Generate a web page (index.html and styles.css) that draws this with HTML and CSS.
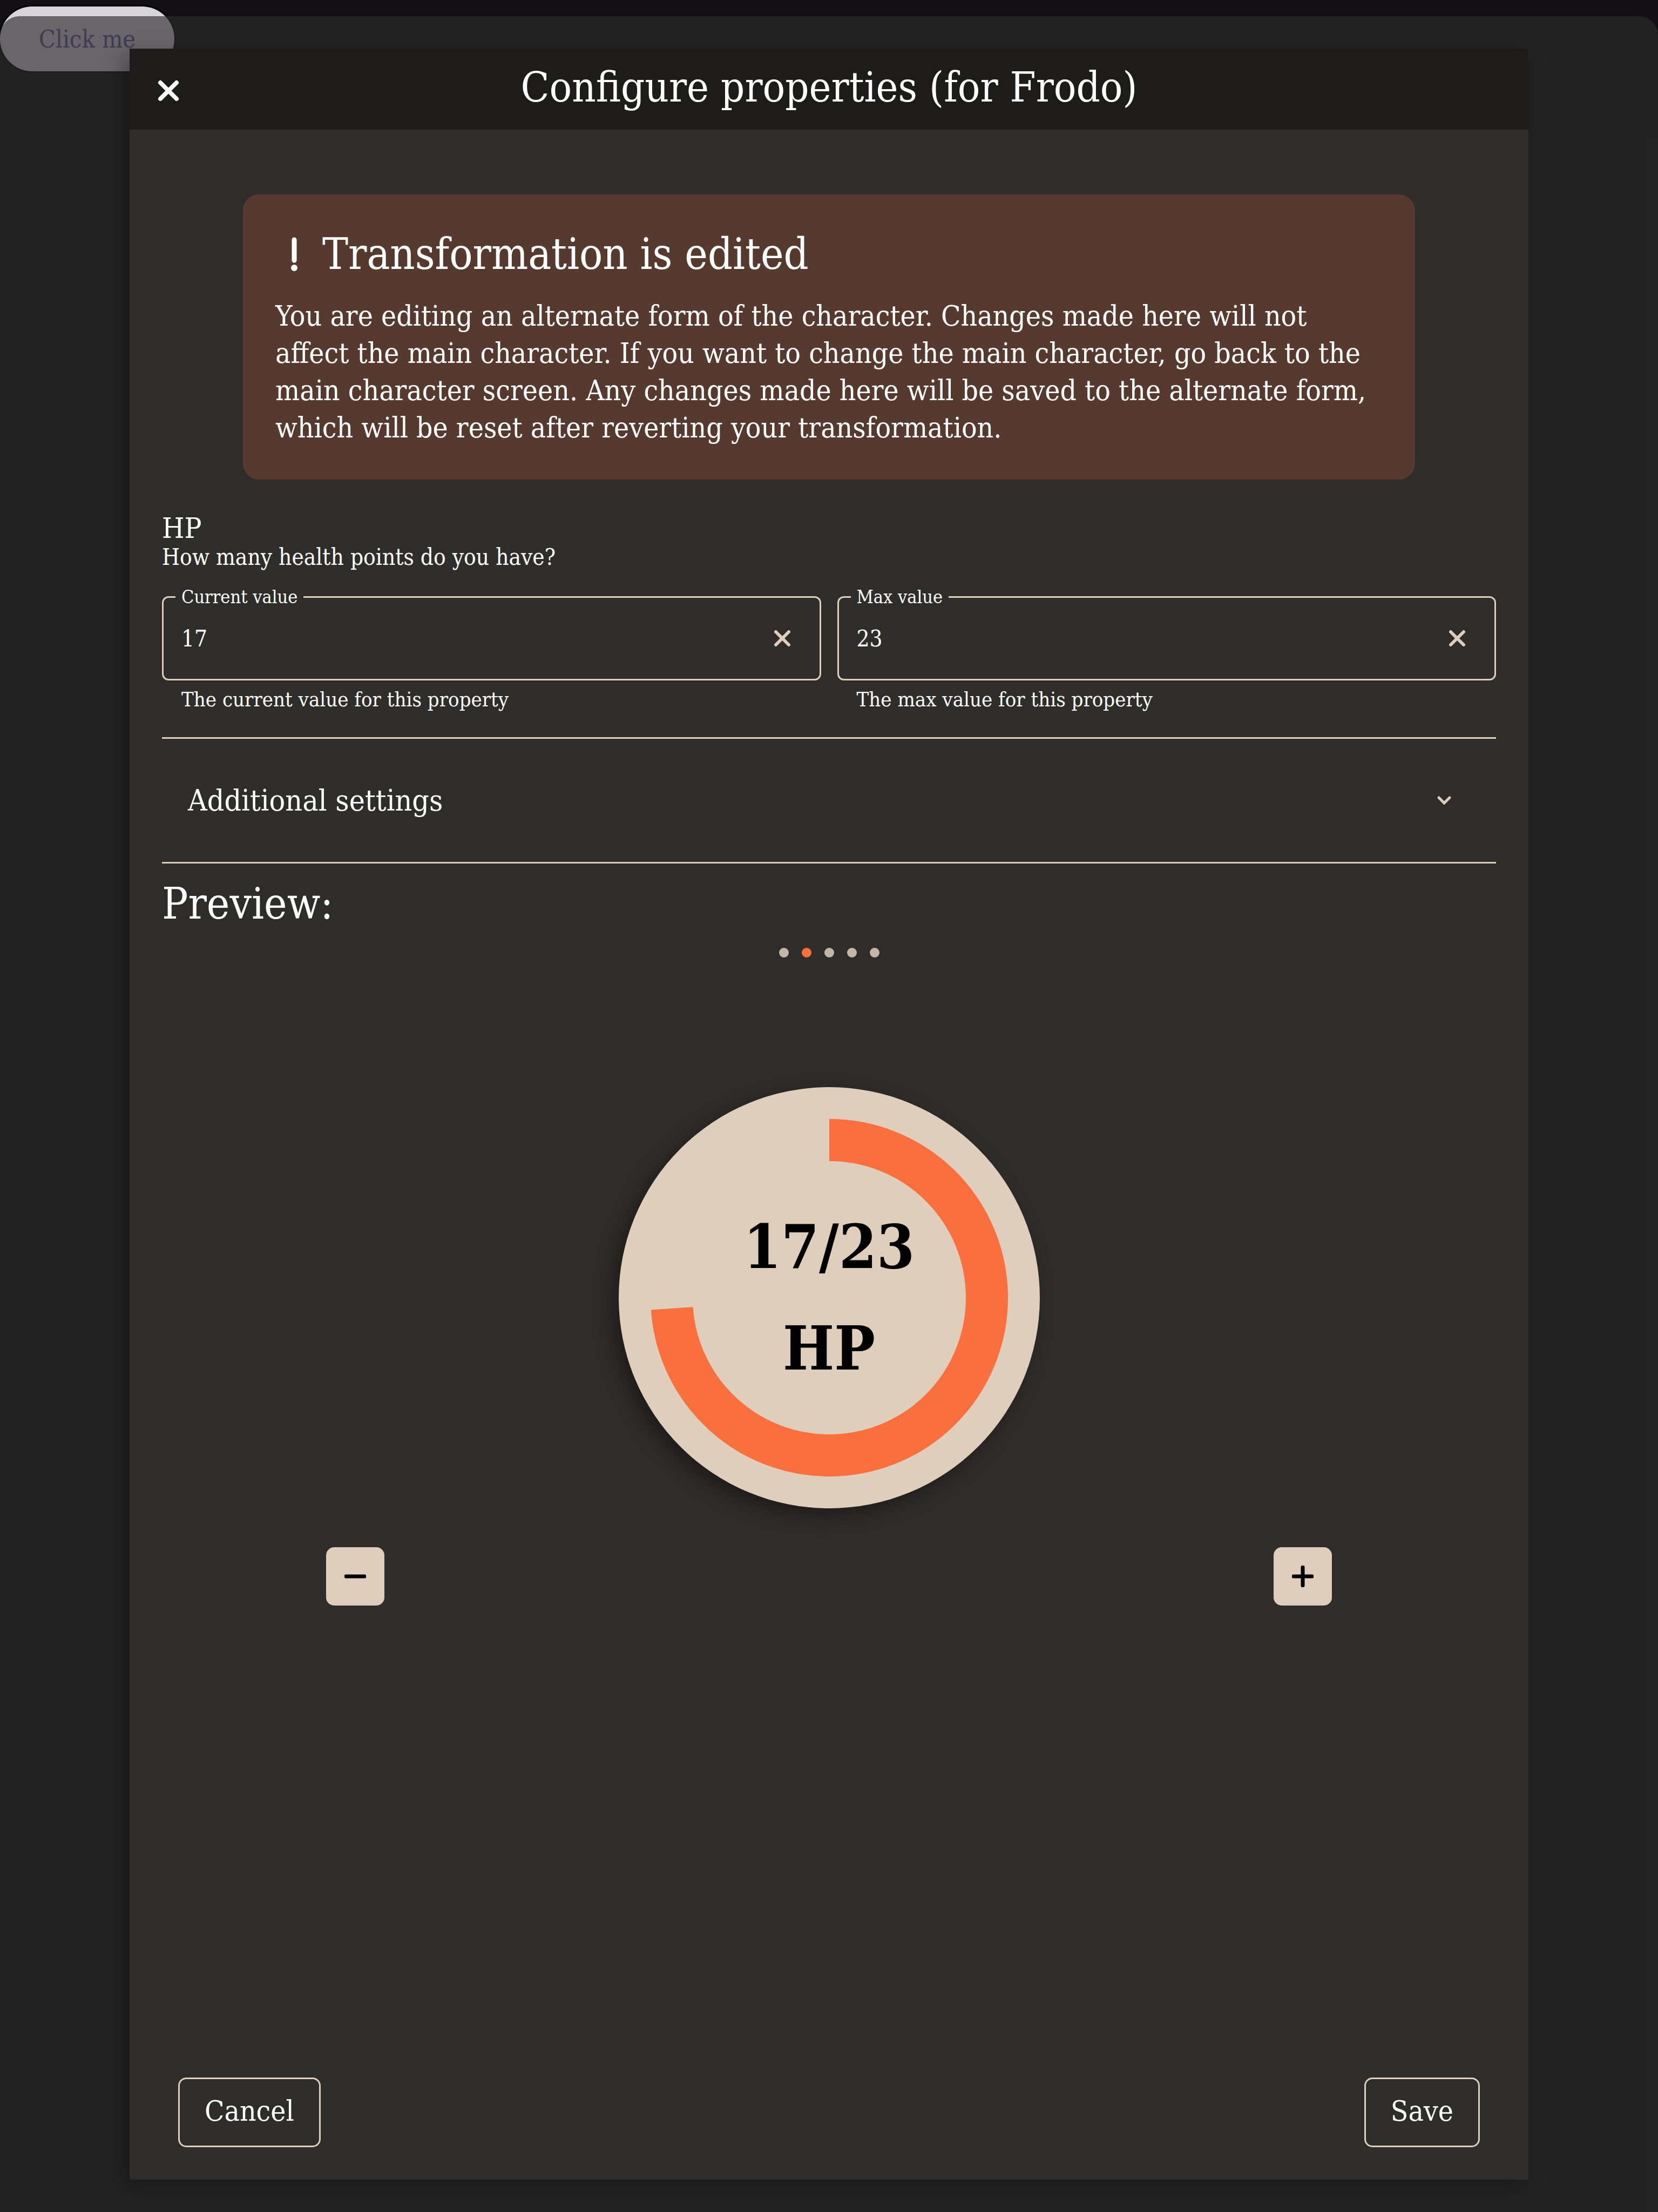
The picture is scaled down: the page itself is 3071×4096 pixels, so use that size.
FILE: index.html
```html
<!DOCTYPE html>
<html lang="en">
<head>
<meta charset="utf-8">
<meta name="viewport" content="width=device-width, initial-scale=1">
<title>Configure properties</title>
<link rel="stylesheet" href="styles.css">
</head>
<body>
<button type="button" class="open-button">Click me</button>

<div class="backdrop">
  <section class="modal" role="dialog" aria-labelledby="modal-title">
    <header class="modal-header">
      <button type="button" class="icon-button close-button" aria-label="Close">
        <svg class="close-icon" viewBox="0 0 40 40"><path d="M5 5L35 35M35 5L5 35"/></svg>
      </button>
      <h1 class="modal-title" id="modal-title">Configure properties (for Frodo)</h1>
    </header>

    <div class="modal-body">
      <div class="alert">
        <h2 class="heading alert-title">
          <svg class="alert-icon" viewBox="0 0 14 64"><path d="M7 5V43"/><circle cx="7" cy="57" r="6"/></svg>
          Transformation is edited
        </h2>
        <p class="alert-text">You are editing an alternate form of the character. Changes made here will not<br>affect the main character. If you want to change the main character, go back to the<br>main character screen. Any changes made here will be saved to the alternate form,<br>which will be reset after reverting your transformation.</p>
      </div>

      <h3 class="property-name">HP</h3>
      <p class="property-hint">How many health points do you have?</p>

      <div class="fields">
        <div class="field">
          <div class="field-box">
            <label class="field-label" for="current-value">Current value</label>
            <input class="field-input" id="current-value" type="text" value="17" aria-describedby="current-help">
            <button type="button" class="icon-button" aria-label="Clear current value">
              <svg class="clear-icon" viewBox="0 0 32 32"><path d="M4 4L28 28M28 4L4 28"/></svg>
            </button>
          </div>
          <p class="field-help" id="current-help">The current value for this property</p>
        </div>
        <div class="field">
          <div class="field-box">
            <label class="field-label" for="max-value">Max value</label>
            <input class="field-input" id="max-value" type="text" value="23" aria-describedby="max-help">
            <button type="button" class="icon-button" aria-label="Clear max value">
              <svg class="clear-icon" viewBox="0 0 32 32"><path d="M4 4L28 28M28 4L4 28"/></svg>
            </button>
          </div>
          <p class="field-help" id="max-help">The max value for this property</p>
        </div>
      </div>

      <button type="button" class="accordion" aria-expanded="false">
        <span>Additional settings</span>
        <svg class="chevron" viewBox="0 0 48 48"><path d="M14 19L24 29L34 19"/></svg>
      </button>

      <h2 class="heading preview-title">Preview:</h2>
      <div class="dots">
        <span class="dot"></span>
        <span class="dot dot-active"></span>
        <span class="dot"></span>
        <span class="dot"></span>
        <span class="dot"></span>
      </div>

      <div class="dial">
        <svg class="dial-ring" viewBox="0 0 780 780">
          <path d="M390 98A292 292 0 1 1 98.7 409.9"/>
        </svg>
        <div class="dial-text"><span>17/23</span><span>HP</span></div>
      </div>

      <div class="steppers">
        <button type="button" class="stepper" aria-label="Decrease">
          <svg class="stepper-icon" viewBox="0 0 40 40"><path d="M3 20H37"/></svg>
        </button>
        <button type="button" class="stepper" aria-label="Increase">
          <svg class="stepper-icon" viewBox="0 0 40 40"><path d="M3 20H37M20 3V37"/></svg>
        </button>
      </div>
    </div>

    <footer class="modal-footer">
      <button type="button" class="outline-button">Cancel</button>
      <button type="button" class="outline-button">Save</button>
    </footer>
  </section>
</div>
</body>
</html>
```

FILE: styles.css
```css
:root {
  --surface: #2f2d2a;
  --header: #1d1c1a;
  --sand: #decebb;
  --accent: #fa6f3e;
  --text: #fff;
}

* {
  box-sizing: border-box;
}

body {
  margin: 0;
  min-height: 100vh;
  padding-top: 12px;
  background: #131015;
  color: var(--text);
  font-family: "DejaVu Serif Condensed", "DejaVu Serif", serif;
  font-size: 53px;
}

button,
input {
  font: inherit;
  color: inherit;
  border: 0;
  background: none;
  padding: 0;
  margin: 0;
}

h1,
h2,
h3,
p {
  margin: 0;
  font-weight: 400;
}

svg {
  display: block;
  fill: none;
  stroke: currentColor;
  stroke-linecap: round;
}

.heading {
  font-size: 80px;
}

.open-button {
  display: block;
  height: 120px;
  padding: 0 72px;
  border-radius: 60px;
  background: #d9d4dc;
  box-shadow: 0 0 0 3px #000;
  color: #6750a4;
  font-size: 45px;
}

.backdrop {
  position: absolute;
  inset: 30px 0 0;
  display: flex;
  padding: 60px 240px;
  border-radius: 36px 36px 0 0;
  background: rgba(45, 46, 44, 0.66);
}

.modal {
  flex: 1;
  display: flex;
  flex-direction: column;
  background: var(--surface);
  box-shadow: -12px 12px 36px rgba(0, 0, 0, 0.3);
}

.modal-header {
  display: grid;
  grid-template-columns: 60px 1fr 60px;
  align-items: center;
  height: 150px;
  padding: 0 42px;
  background: var(--header);
}

.modal-title {
  padding-bottom: 6px;
  text-align: center;
  font-size: 77px;
  line-height: 96px;
}

.icon-button {
  display: grid;
  place-items: center;
  width: 60px;
  height: 60px;
}

.close-button {
  height: 66px;
  padding-top: 6px;
}

.close-icon {
  width: 40px;
  height: 40px;
  stroke-width: 8;
}

.modal-body {
  flex: 1;
  padding: 120px 60px 0;
}

.alert {
  margin: 0 150px 60px;
  padding: 60px 60px 62px;
  border-radius: 30px;
  background: #573a2f;
}

.alert-title {
  display: flex;
  align-items: center;
  gap: 45px;
  padding-left: 28px;
  line-height: 102px;
}

.alert-icon {
  width: 14px;
  height: 64px;
  stroke-width: 9;
}

.alert-icon circle {
  fill: currentColor;
  stroke: none;
}

.alert-text {
  margin-top: 28px;
  line-height: 69px;
  white-space: nowrap;
}

.property-name {
  font-size: 53px;
  line-height: 60px;
}

.property-hint {
  font-size: 42px;
  line-height: 48px;
}

.fields {
  display: grid;
  grid-template-columns: 1fr 1fr;
  gap: 30px;
  margin: 48px 0 47px;
}

.field-box {
  position: relative;
  display: flex;
  align-items: center;
  height: 156px;
  padding: 0 39px 0 33px;
  border: 3px solid var(--sand);
  border-radius: 12px;
}

.field-box .icon-button {
  color: var(--sand);
}

.field-label {
  position: absolute;
  top: -24px;
  left: 22px;
  padding: 0 11px;
  background: var(--surface);
  font-size: 34px;
  line-height: 45px;
}

.field-input {
  flex: 1;
  min-width: 0;
  height: 72px;
  outline: 0;
  font-size: 42px;
}

.clear-icon {
  width: 32px;
  height: 32px;
  stroke-width: 6;
}

.field-help {
  margin: 12px 36px 0;
  font-size: 38px;
  line-height: 46px;
}

.accordion {
  display: flex;
  align-items: center;
  justify-content: space-between;
  width: 100%;
  height: 234px;
  padding: 0 72px 0 48px;
  border: solid var(--sand);
  border-width: 3px 0;
  font-size: 55px;
}

.chevron {
  width: 48px;
  height: 48px;
  color: var(--sand);
  stroke-width: 5;
}

.preview-title {
  margin: 30px 0 36px;
  line-height: 90px;
}

.dots {
  display: flex;
  justify-content: center;
  gap: 24px;
}

.dot {
  width: 18px;
  height: 18px;
  border-radius: 50%;
  background: #c3b6a6;
}

.dot-active {
  background: var(--accent);
}

.dial {
  display: grid;
  place-items: center;
  width: 780px;
  height: 780px;
  margin: 240px auto 72px;
  border-radius: 50%;
  background: var(--sand);
  box-shadow: -12px 12px 36px rgba(0, 0, 0, 0.4);
}

.dial-ring,
.dial-text {
  grid-area: 1 / 1;
}

.dial-ring {
  width: 780px;
  height: 780px;
  color: var(--accent);
  stroke-width: 78;
  stroke-linecap: butt;
}

.dial-text {
  display: grid;
  justify-items: center;
  color: #000;
  font-size: 112px;
  font-weight: 700;
  line-height: 188px;
}

.steppers {
  display: flex;
  justify-content: space-between;
  padding: 0 304px;
}

.stepper {
  display: grid;
  place-items: center;
  width: 108px;
  height: 108px;
  border-radius: 15px;
  background: var(--sand);
  color: #000;
}

.stepper-icon {
  width: 40px;
  height: 40px;
  stroke-width: 7;
}

.modal-footer {
  display: flex;
  justify-content: space-between;
  padding: 0 90px 60px;
}

.outline-button {
  height: 129px;
  padding: 0 46px 6px;
  border: 3px solid var(--sand);
  border-radius: 15px;
}
```
